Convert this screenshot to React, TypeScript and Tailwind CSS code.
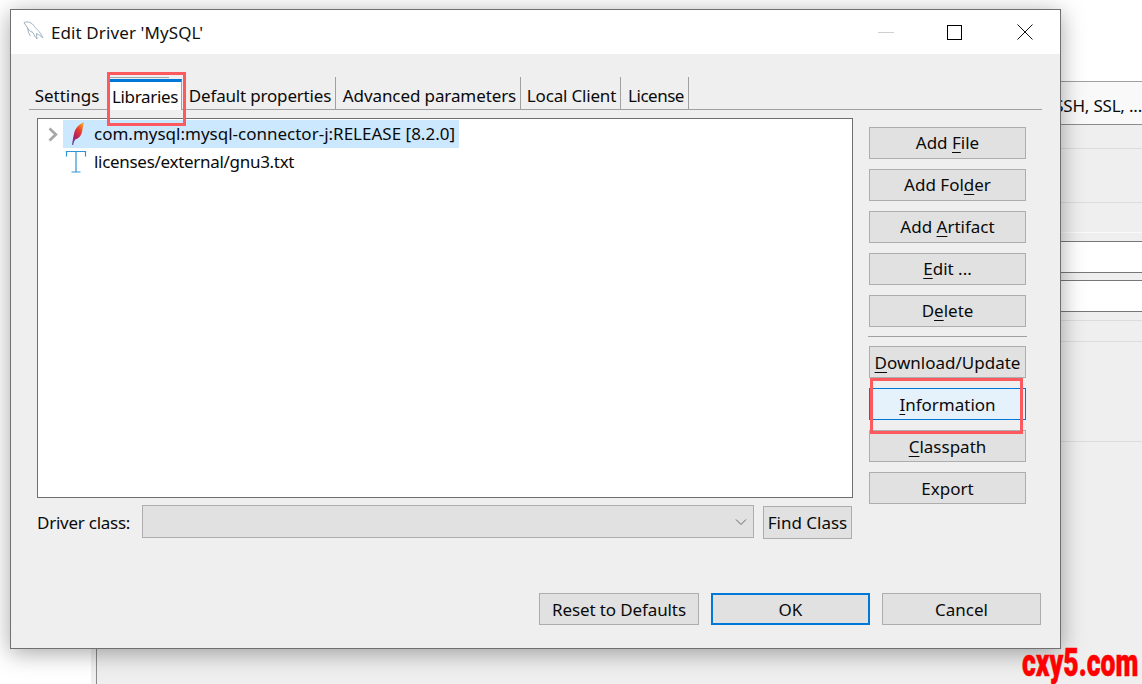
const font = { fontFamily: '"Noto Sans", "Open Sans", sans-serif' };

function Btn({ pre, u, post, className = "" }: { pre?: string; u?: string; post?: string; className?: string }) {
  return (
    <div className={`h-8 flex items-center justify-center border border-[#adadad] bg-[#e1e1e1] whitespace-pre ${className}`}>
      <span>
        {pre}
        {u ? <span className="underline underline-offset-[3px] decoration-1">{u}</span> : null}
        {post}
      </span>
    </div>
  );
}

function Dolphin() {
  return (
    <svg width="22" height="22" viewBox="0 0 22 22" fill="none" stroke="#9db2c1" strokeWidth="1">
      <path d="M1 2.500c4-1.500 8 0 10.500 4 1.500 2.500 5 4 8.500 11.500-2.500-2-4-3.500-6.500-4.500l.5 5.500c-2-2-3-4-4-6.500-3-1-5-3-6-5.500L2.500 5z" />
      <path d="M4.500 7.500c.5 3.500 1 6 3 8.500" />
    </svg>
  );
}

function Feather() {
  return (
    <svg width="18" height="24" viewBox="0 0 18 24">
      <defs>
        <linearGradient id="fg" x1="0.85" y1="0" x2="0.15" y2="1">
          <stop offset="0" stopColor="#f7a823" />
          <stop offset="0.35" stopColor="#ea3b2a" />
          <stop offset="0.68" stopColor="#b01f63" />
          <stop offset="1" stopColor="#5f3b8e" />
        </linearGradient>
      </defs>
      <path d="M14.800 0.300C10.500 2 6.600 5.800 5.200 11 4.300 14.500 3.800 18 3 22.800l1.100.2C4.600 20.500 5.200 19 6.200 17.500c3.500-.8 5.800-3.500 6.800-7.500.7-3.200 1.300-6.500 1.800-9.700z" fill="url(#fg)" />
    </svg>
  );
}

function TIcon() {
  return (
    <svg width="22" height="24" viewBox="0 0 22 24" fill="none" stroke="#2f93d6" strokeWidth="1.200">
      <path d="M1.500 6.500V1.500h19V6.500M11 1.500V22M6.500 22h9" />
    </svg>
  );
}

export default function App() {
  return (
    <div className="relative w-[1142px] h-[684px] overflow-hidden bg-white text-[#0a0a0a] text-[17px]" style={font}>
      {/* Window behind the dialog */}
      <div className="h-full pl-[91px] pt-[81px]">
        <div className="h-full flex flex-col border-t border-[#a0a0a0] border-l-[5px] border-l-[#f0f0f0] bg-[#efefef]">
          <div className="flex flex-col h-full border-l border-l-[#8c8c8c]">
            <div className="h-[43px] shrink-0 bg-[#f9f9f9] border-b border-[#8c8c8c] flex justify-end items-center whitespace-nowrap pt-[6px] tracking-[-0.2px]">SSH, SSL, ...</div>
            <div className="h-[24px] shrink-0 border-b border-[#dcdcdc]" />
            <div className="h-[54px] shrink-0 border-b border-[#dcdcdc]" />
            <div className="h-[30px] shrink-0 border-b border-[#fafafa]" />
            <div className="h-[8px] shrink-0" />
            <div className="h-[32px] shrink-0 bg-white border-y border-[#777]" />
            <div className="h-[7px] shrink-0" />
            <div className="h-[32px] shrink-0 bg-white border-y border-[#777]" />
            <div className="h-[9px] shrink-0 border-b border-[#dcdcdc]" />
            <div className="h-[21px] shrink-0 border-b border-[#dcdcdc]" />
            <div className="h-[100px] shrink-0 border-b border-[#dcdcdc]" />
          </div>
        </div>
      </div>

      {/* Dialog */}
      <div className="absolute left-[10px] top-[9px] w-[1051px] h-[640px] flex flex-col border border-[#707070] bg-[#efefef] shadow-[0_4px_22px_rgba(0,0,0,0.35)]">
        <div className="h-[44px] shrink-0 bg-white flex items-center">
          <div className="ml-[12px] w-[23px] -mt-[3px]"><Dolphin /></div>
          <span className="ml-[5px] mt-[1px] tracking-[0.1px] text-[#111]">Edit Driver 'MySQL'</span>
          <div className="ml-auto flex items-center">
            <div className="w-[16px] h-px bg-[#cfcfcf] mr-[53px]" />
            <div className="w-[15px] h-[15px] border border-black mr-[55px]" />
            <svg width="16" height="16" viewBox="0 0 16 16" stroke="#111" strokeWidth="1" className="mr-[27px]">
              <path d="M0.500 0.500L15.500 15.500M15.500 0.500L0.500 15.500" />
            </svg>
          </div>
        </div>

        <div className="flex-1 flex flex-col">
          {/* Tabs */}
          <div className="mt-[23px] mx-[18px] h-[33px] shrink-0 flex border-b border-[#a0a0a0] whitespace-nowrap">
            <div className="w-[80px] flex items-center justify-center pt-[5px] pr-[4px]">Settings</div>
            <div className="w-[73px] -mb-px flex flex-col">
              <div className="h-px w-[60px] bg-[#a8a8a8] mb-px shrink-0" />
              <div className="flex-1 flex items-center justify-center bg-white border-t-[3px] border-t-[#0078d7] border-r border-r-[#a0a0a0] pt-[1px] tracking-[-0.33px]">Libraries</div>
            </div>
            <div className="w-[154px] flex items-center justify-center pt-[5px] pl-[3px] tracking-[-0.18px] border-r border-[#a0a0a0]">Default properties</div>
            <div className="w-[185px] flex items-center justify-center pt-[5px] pl-[3px] tracking-[-0.1px] border-r border-[#a0a0a0]">Advanced parameters</div>
            <div className="w-[100px] flex items-center justify-center pt-[5px] pl-[2px] tracking-[-0.18px] border-r border-[#a0a0a0]">Local Client</div>
            <div className="w-[68px] flex items-center justify-center pt-[5px] pl-[3px] tracking-[-0.5px] border-r border-[#a0a0a0]">License</div>
          </div>

          {/* Main */}
          <div className="flex mt-[8px] ml-[26px]">
            <div className="w-[816px] shrink-0">
              <div className="h-[380px] bg-white border border-[#6f6f6f] pt-[1px]">
                <div className="h-[28px] flex items-center">
                  <svg width="12" height="15" viewBox="0 0 12 15" fill="none" stroke="#a8a8a8" strokeWidth="2.800" className="ml-[9px] mr-[4px]">
                    <path d="M2.500 1.500L8.800 7.500L2.500 13.500" />
                  </svg>
                  <div className="flex items-center h-full bg-[#cce8ff] pl-[6px] pr-[4px] whitespace-nowrap">
                    <div className="w-[19px] -mt-[1px]"><Feather /></div>
                    <span className="ml-[6px]">com.mysql:mysql-connector-j:RELEASE [8.2.0]</span>
                  </div>
                </div>
                <div className="h-[28px] flex items-center pl-[27px] whitespace-nowrap">
                  <TIcon />
                  <span className="ml-[7px] tracking-[-0.3px]">licenses/external/gnu3.txt</span>
                </div>
              </div>

              <div className="flex mt-[7px] items-start">
                <span className="w-[105px] h-[33px] pt-[2px] flex items-center whitespace-nowrap tracking-[-0.25px]">Driver class:</span>
                <div className="w-[612px] h-[33px] border border-[#adadad] bg-[#e1e1e1] flex items-center justify-end pr-[6px]">
                  <svg width="12" height="8" viewBox="0 0 12 8" fill="none" stroke="#666" strokeWidth="1"><path d="M1 1.500L6 6.500L11 1.500" /></svg>
                </div>
                <Btn pre="Find Class" className="ml-[9px] mt-[1px] w-[89px] h-[33px] pt-[1px]" />
              </div>
            </div>

            <div className="w-[157px] ml-[16px] mt-[9px] flex flex-col shrink-0">
              <div className="flex flex-col gap-[10px]">
                <Btn pre="Add " u="F" post="ile" />
                <Btn pre="Add Fol" u="d" post="er" />
                <Btn pre="Add " u="A" post="rtifact" />
                <Btn u="E" post="dit ..." />
                <Btn pre="D" u="e" post="lete" />
              </div>
              <div className="h-px bg-[#a0a0a0] mt-[9px] mb-[9px] -mx-px" />
              <div className="flex flex-col gap-[10px]">
                <Btn u="D" post="ownload/Update" className="pt-[1px]" />
                <Btn u="I" post="nformation" className="pt-[1px] !bg-[#e5f1fb] !border-[#0078d7]" />
                <Btn u="C" post="lasspath" className="pt-[1px]" />
                <Btn pre="Export" className="pt-[1px]" />
              </div>
            </div>
          </div>

          {/* Footer */}
          <div className="flex mt-auto mb-[23px] ml-[528px]">
            <Btn pre="Reset to Defaults" className="w-[160px] pt-[1px] tracking-[-0.12px]" />
            <Btn pre="OK" className="ml-[12px] w-[159px] pt-[1px] !border-2 !border-[#0078d7]" />
            <Btn pre="Cancel" className="ml-[12px] w-[159px] pt-[1px]" />
          </div>
        </div>
      </div>

      {/* Annotations */}
      <div className="absolute left-[107px] top-[72px] w-[79px] h-[54px] border-[3px] border-[#fd5a5f]" />
      <div className="absolute left-[870px] top-[378px] w-[153px] h-[56px] border-[3px] border-[#fd5a5f]" />
      <div className="absolute right-[4px] top-[642px] h-[42px] flex items-center text-[#fe0000] text-[38px] font-black whitespace-nowrap origin-right scale-x-[0.7] [-webkit-text-stroke:0.5px_#fe0000]" style={{ fontFamily: '"Roboto", sans-serif' }}>cxy5.com</div>
    </div>
  );
}
